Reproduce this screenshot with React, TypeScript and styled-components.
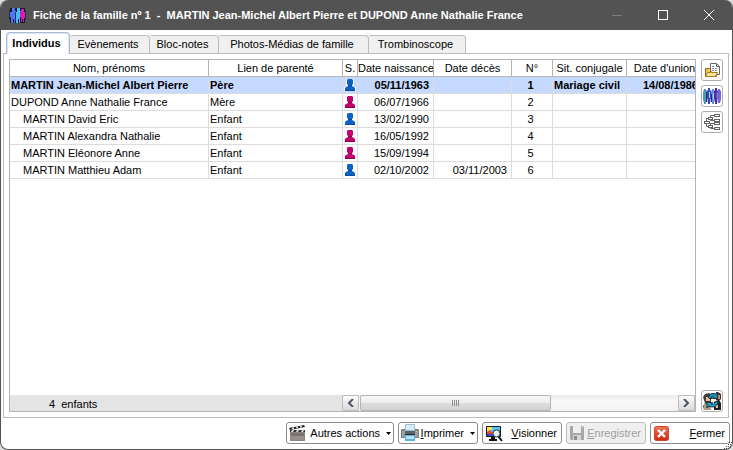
import React, { useState } from "react";
import styled, { createGlobalStyle, css } from "styled-components";

const GlobalStyle = createGlobalStyle`
  *, *::before, *::after { box-sizing: border-box; }
  html, body { margin: 0; padding: 0; }
  body { background: #dcdcdc; }
  body, button { font-family: "Liberation Sans", Arial, sans-serif; font-size: 11px; color: #000; }
`;

/* ---------- window frame ---------- */

const Window = styled.div`
  display: flex;
  flex-direction: column;
  height: 100vh;
  min-height: 280px;
  border: 1px solid #535353;
  border-top: 0;
  border-radius: 8px;
  background: #fff;
  overflow: hidden;
`;

const TitleBar = styled.header`
  display: flex;
  align-items: center;
  flex: 0 0 30px;
  padding-left: 8px;
  background: #535353;
  color: #fff;
`;

const Title = styled.h1`
  flex: 1;
  min-width: 0;
  margin: 0 0 0 7px;
  font-size: 11px;
  line-height: 14px;
  font-weight: bold;
  white-space: pre;
  overflow: hidden;
`;

const CaptionButton = styled.button`
  display: flex;
  align-items: center;
  justify-content: center;
  width: 46px;
  height: 30px;
  padding: 0;
  border: 0;
  background: none;
  color: #fff;
  &:disabled { color: #7c7c7c; }
`;

/* ---------- tabs ---------- */

const TabStrip = styled.div`
  display: flex;
  align-items: flex-end;
  flex: 0 0 23px;
  padding: 0 5px;
  position: relative;
`;

const Tab = styled.button<{ $width: number; $active: boolean }>`
  width: ${(p) => p.$width}px;
  height: 18px;
  padding: 0 3px 0 0;
  border: 1px solid #bcbcbc;
  border-left-width: 0;
  border-bottom: 0;
  border-radius: 2px 4px 0 0;
  background: #f0f0f0;
  line-height: 17px;
  white-space: nowrap;
  ${(p) =>
    p.$active &&
    css`
      z-index: 1;
      height: 22px;
      margin-bottom: -1px;
      border: 1px solid #a9bbd8;
      border-bottom: 0;
      border-radius: 4px 4px 0 0;
      box-shadow: inset 1px 1px 0 #dce6f6, inset -1px 0 0 #dce6f6;
      background: #fff;
      font-weight: bold;
    `}
`;

const Panel = styled.main`
  display: flex;
  flex: 1;
  min-height: 0;
  gap: 5px;
  margin: 0 3px 0 2px;
  padding: 5px;
  border: 1px solid #bcbcbc;
`;

/* ---------- grid ---------- */

const GridBox = styled.section`
  display: flex;
  flex-direction: column;
  flex: 1;
  min-width: 0;
  border: 1px solid #b4b4b4;
`;

const GridView = styled.div`
  flex: 1;
  min-height: 0;
  overflow: hidden;
`;

const Grid = styled.table`
  width: 100%;
  min-width: 693px;
  table-layout: fixed;
  border-collapse: separate;
  border-spacing: 0;
`;

const Col = styled.col<{ $width?: number }>`
  width: ${(p) => (p.$width ? `${p.$width}px` : "auto")};
`;

const HeadCell = styled.th`
  height: 17px;
  padding: 0;
  border-right: 1px solid #b4b4b4;
  border-bottom: 1px solid #b4b4b4;
  font-weight: normal;
  line-height: 16px;
  white-space: nowrap;
  overflow: hidden;
`;

const Row = styled.tr<{ $selected: boolean }>`
  background: ${(p) => (p.$selected ? "#c6daff" : "#fff")};
  font-weight: ${(p) => (p.$selected ? "bold" : "normal")};
`;

const Cell = styled.td<{ $align?: "left" | "center" | "right"; $indent?: boolean }>`
  height: 17px;
  padding: 0 4px 0 ${(p) => (p.$indent ? 13 : 1)}px;
  border-right: 1px solid #dcdcdc;
  border-bottom: 1px solid #dcdcdc;
  text-align: ${(p) => p.$align ?? "left"};
  line-height: 16px;
  white-space: nowrap;
`;

const IconCell = styled(Cell)`
  padding: 0;
  text-align: center;
  svg { display: block; margin: 0 auto; }
`;

const GridFooter = styled.footer`
  display: flex;
  flex: 0 0 16px;
  background: #e4e4e4;
`;

const Summary = styled.p`
  flex: 1;
  margin: 0;
  padding: 3px 0 0 39px;
  font-size: 11px;
  line-height: 13px;
  white-space: pre;
`;

const ScrollBar = styled.div`
  display: flex;
  width: 51.5%;
  height: 16px;
  background: linear-gradient(#eaeaea, #f8f8f8 40%, #f2f2f2);
`;

const ScrollArrow = styled.button`
  display: flex;
  align-items: center;
  justify-content: center;
  width: 17px;
  height: 16px;
  padding: 0;
  border: 1px solid #bdbdbd;
  border-radius: 1px;
  background: linear-gradient(#fdfdfd, #e9e9e9 50%, #dcdcdc);
`;

const ScrollTrack = styled.div`
  flex: 1;
  padding-left: 1px;
`;

const ScrollThumb = styled.button`
  display: flex;
  align-items: center;
  justify-content: center;
  width: 60%;
  height: 16px;
  padding: 0;
  border: 1px solid #b4b4b4;
  border-radius: 2px;
  background: linear-gradient(#f8f8f8, #ececec 48%, #dcdcdc 52%, #d2d2d2);
`;

/* ---------- side tools ---------- */

const SideTools = styled.nav`
  display: flex;
  flex-direction: column;
  gap: 4px;
`;

const ToolButton = styled.button<{ $last?: boolean }>`
  display: flex;
  align-items: center;
  justify-content: center;
  width: 22px;
  height: 22px;
  padding: 0;
  border: 1px solid #aeaeae;
  border-radius: 3px;
  background: #fff;
  ${(p) => p.$last && "margin-top: auto;"}
`;

/* ---------- bottom buttons ---------- */

const ActionBar = styled.div`
  display: flex;
  justify-content: flex-end;
  align-items: flex-start;
  flex: 0 0 31px;
  gap: 4px;
  padding: 4px 2px 0;
`;

const ActionButton = styled.button<{ $width?: number }>`
  display: flex;
  align-items: center;
  width: ${(p) => p.$width ?? 80}px;
  height: 22px;
  padding: 0 4px 0 2px;
  border: 1px solid #8c8c8c;
  border-radius: 3px;
  background: #fff;
  line-height: 14px;
  white-space: nowrap;
  svg { flex: none; }
  &:disabled {
    border-color: #bdbdbd;
    background: #efefef;
    color: #a0a0a0;
  }
`;

const CaretButton = styled(ActionButton)`
  padding-right: 2px;
`;

const ActionLabel = styled.span<{ $menu?: boolean }>`
  flex: 1;
  text-align: right;
  ${(p) => p.$menu && "padding-right: 6px;"}
`;

const Grip = styled.div`
  position: absolute;
  right: 0;
  bottom: 0;
  line-height: 0;
`;

/* ---------- drawings ---------- */

const FamilyIcon = () => (
  <svg width="17" height="16" viewBox="0 0 17 16" aria-hidden="true">
    <path d="M1 1h15v15H1z" fill="#15182c" />
    <path d="M0 3h1v10H0zM16 3h1v10h-1z" fill="#2a3041" />
    <path d="M3 1h3v3h1v6H6v6H5v-4H4v4H2v-6H1V5h2z" fill="#4b78f6" />
    <path d="M8 1h3v3h1v6h-1v6h-1v-4H9v4H7v-6H6V5h2z" fill="#4fb9f8" />
    <path d="M12 2h3v3h1v6h-1v4h-1v-3h-1v3h-1v-5h-1V6h1z" fill="#dc1cba" />
    <path d="M6 5h1v9H6zM11 5h1v1h-1z" fill="#20306e" />
  </svg>
);

const PersonIcon = ({ color, edge }: { color: string; edge: string }) => (
  <svg width="12" height="12" viewBox="-1 0 12 12" aria-hidden="true">
    <path d="M3 0h4l1 1v5L7 7l3 2v3H0V9l3-2-1-1V1z" fill="none" stroke="#fff" strokeWidth="2" />
    <path d="M3 0h4l1 1v4L7 6v1l2 1 1 1v3H0V9l1-1 2-1V6L2 5V1z" fill={color} />
    <path d="M0 11h10v1H0zM3 6h4v1H3z" fill={edge} />
  </svg>
);

const FolderDocIcon = () => (
  <svg width="16" height="16" viewBox="0 0 16 16" aria-hidden="true">
    <path d="M1.500 14.500v-8h4l1 1h6v7z" fill="#f6c64e" stroke="#8b6512" />
    <path d="M6.500 1.500h6l3 3v8h-9z" fill="#fff" stroke="#666" />
    <path d="M12.500 1.500v3h3" fill="none" stroke="#666" />
    <path d="M8 4.500h3M8 6.500h6M8 8.500h6" stroke="#8a8a8a" strokeDasharray="2 1" />
    <path d="M1.500 14.500l2-4h3l1-1 0 1h6l-2 4z" fill="#ffe59a" stroke="#a87a1b" />
  </svg>
);

const CrowdIcon = () => (
  <svg width="18" height="16" viewBox="0 0 18 16" aria-hidden="true">
    <path d="M0 2h18v12H0z" fill="#b3aee4" />
    <path d="M1 1h2v2h1v8H3v5H1v-4H0V4h1z" fill="#4b9cae" />
    <path d="M5 0h2v3h1v8H7v5H5v-5H4V3h1z" fill="#3d4cb4" />
    <path d="M9 1h2v2h1v9h-1v4H9v-4H8V4h1z" fill="#5c91e8" />
    <path d="M12 0h2v3h1v8h-1v5h-2v-5h-1V3h1z" fill="#5426a2" />
    <path d="M15 1h2v2h1v9h-1v3h-2v-4h-1V4h1z" fill="#6c6bd0" />
    <path d="M3 4h1v10H3zM8 6h1v8H8z" fill="#2c2f88" />
    <path d="M6 4h1v6H6zM10 5h1v6h-1z" fill="#a4d8f4" />
    <path d="M13 5h1v5h-1z" fill="#9a49c8" />
  </svg>
);

const TreeIcon = () => (
  <svg width="16" height="16" viewBox="0 0 16 16" aria-hidden="true">
    <g fill="#fff" stroke="#626262">
      <path d="M2.500 7v-2.500h2M2.500 10v2.500h2M6.500 3v-1.500h4M6.500 5v1.500h4M6.500 11v-1.500h4M6.500 13v1.500h4" fill="none" />
      <rect x="0.500" y="7.500" width="5" height="2" />
      <rect x="4.500" y="3.500" width="4" height="2" />
      <rect x="4.500" y="11.500" width="4" height="2" />
      <rect x="10.500" y="0.500" width="5" height="2" />
      <rect x="10.500" y="5.500" width="5" height="2" />
      <rect x="10.500" y="8.500" width="5" height="2" />
      <rect x="10.500" y="13.500" width="5" height="2" />
    </g>
  </svg>
);

const SwapPeopleIcon = () => (
  <svg width="18" height="18" viewBox="0 0 18 18" aria-hidden="true">
    <path d="M0 5l2-3 4-1 3 2 1 4-3 5 1 5-7 1-1-4 2-3z" fill="#423b38" />
    <path d="M3 5h4v4H3z" fill="#edbd93" />
    <path d="M1 12l4-1 3 3v4H1z" fill="#b49a86" />
    <path d="M12 2l3-2 3 2v5l-2 2-3-1z" fill="#4b2a1e" />
    <path d="M14 3h3v4h-2z" fill="#d98e63" />
    <path d="M11 10l5-2 2 3v7h-7z" fill="#1e2328" />
    <path d="M12 13h3v3h-2z" fill="#e9b78d" />
    <path d="M5 5c2-4 6-4 8-3l1-2 1 6-5 1 1-2c-2-1-3 0-4 2z" fill="#1890b6" stroke="#083448" strokeWidth="1" />
    <path d="M15 10c-1 5-6 6-9 4l-2 2 0-6 6 1-2 1c2 1 4 0 5-3z" fill="#24a4c4" stroke="#083448" strokeWidth="1" />
    <path d="M8 7h3v3H8z" fill="#fff" />
  </svg>
);

const ClapIcon = () => (
  <svg width="17" height="18" viewBox="0 0 17 18" aria-hidden="true">
    <path d="M0 4l15-3 1 2L1 6z" fill="#222" />
    <path d="M3 4l2-1 0 2-2 0zM7 3l2-1 0 2-2 0zM11 2l2 0 0 1-2 1z" fill="#ddd" />
    <path d="M1 6h15v2H1z" fill="#333" />
    <path d="M3 6h2L4 8H2zM8 6h2L9 8H7zM13 6h2l-1 2h-2z" fill="#ddd" />
    <path d="M1 8h15v9H1z" fill="#8a8580" />
    <path d="M2 9h13v3H2z" fill="#77726e" />
    <path d="M2 12h13v4H2z" fill="#969089" />
  </svg>
);

const PrinterIcon = () => (
  <svg width="18" height="18" viewBox="0 0 18 18" aria-hidden="true">
    <path d="M4.500 0.500h9v6h-9z" fill="#d7ecf5" stroke="#9cc0cf" />
    <path d="M1 5h3v2h10V5h3l1 1v8H0V6z" fill="#7b8186" />
    <path d="M1 7h3v6H1zM14 7h3v6h-3z" fill="#9aa0a4" />
    <path d="M4 7h10v3H4z" fill="#5c6267" />
    <path d="M4 10h10v1H4z" fill="#2a2d30" />
    <path d="M4 11h10v6H4z" fill="#5fb2da" />
    <path d="M5 12h8v3H5z" fill="#b6e2f5" />
    <path d="M15 7h1v1h-1z" fill="#c6e865" />
  </svg>
);

const ViewIcon = () => (
  <svg width="18" height="18" viewBox="0 0 18 18" aria-hidden="true">
    <rect x="1" y="2" width="15" height="11" rx="1" fill="#10151c" />
    <path d="M2 3h13v9H2z" fill="#53c3f8" />
    <path d="M2 3h5v3H5v2H2z" fill="#ffe548" />
    <path d="M2 8l3-2 3 3v3H2z" fill="#e24a35" />
    <path d="M2 10h6v2H2z" fill="#2553d0" />
    <path d="M6 13h4v2h2v2H4v-2h2z" fill="#111" />
    <path d="M13 12l4 5" stroke="#111" strokeWidth="2" />
    <circle cx="11.500" cy="9.500" r="3.500" fill="#e4f3fb" stroke="#333" />
    <path d="M10 9l2-2" stroke="#fff" />
  </svg>
);

const DiskIcon = () => (
  <svg width="16" height="16" viewBox="0 0 16 16" aria-hidden="true">
    <path d="M1 1h13l1 1v13H2l-1-1z" fill="#a7a7a7" />
    <path d="M4 1h8v7H4z" fill="#efefef" />
    <path d="M4 10h8v5H4z" fill="#d5d5d5" />
    <path d="M5 11h3v4H5z" fill="#8e8e8e" />
    <path d="M13 2h1v1h-1z" fill="#eee" />
  </svg>
);

const CloseIcon = () => (
  <svg width="17" height="17" viewBox="0 0 17 17" aria-hidden="true">
    <defs>
      <linearGradient id="closeRed" x1="0" y1="0" x2="0" y2="1">
        <stop offset="0" stopColor="#ee7a5b" />
        <stop offset="1" stopColor="#d0260f" />
      </linearGradient>
    </defs>
    <rect x="1.500" y="1.500" width="14" height="14" rx="2" fill="url(#closeRed)" stroke="#c9452c" />
    <path d="M5 5l7 7M12 5l-7 7" stroke="#fff" strokeWidth="2.400" />
  </svg>
);

const CaretDown = () => (
  <svg width="5" height="3" viewBox="0 0 5 3" aria-hidden="true">
    <path d="M0 0h5L2.500 3z" fill="#000" />
  </svg>
);

const Arrow = ({ right }: { right?: boolean }) => (
  <svg width="7" height="8" viewBox="0 0 7 8" aria-hidden="true">
    <path d={right ? "M1 0l4 4-4 4" : "M6 0L2 4l4 4"} fill="none" stroke="#4d5564" strokeWidth="2" />
  </svg>
);

/* ---------- data ---------- */

const tabs = [
  { label: "Individus", width: 64 },
  { label: "Evènements", width: 80 },
  { label: "Bloc-notes", width: 69 },
  { label: "Photos-Médias de famille", width: 150 },
  { label: "Trombinoscope", width: 97 },
];

const columns: { label: string; width?: number }[] = [
  { label: "Nom, prénoms" },
  { label: "Lien de parenté", width: 134 },
  { label: "S.", width: 15 },
  { label: "Date naissance", width: 76 },
  { label: "Date décès", width: 78 },
  { label: "N°", width: 41 },
  { label: "Sit. conjugale", width: 74 },
  { label: "Date d'union", width: 76 },
];

const people = [
  { name: "MARTIN Jean-Michel Albert Pierre", link: "Père", sex: "m", born: "05/11/1963", died: "", status: "Mariage civil", union: "14/08/1986" },
  { name: "DUPOND Anne Nathalie France", link: "Mère", sex: "f", born: "06/07/1966", died: "", status: "", union: "" },
  { name: "MARTIN David Eric", link: "Enfant", sex: "m", born: "13/02/1990", died: "", status: "", union: "" },
  { name: "MARTIN Alexandra Nathalie", link: "Enfant", sex: "f", born: "16/05/1992", died: "", status: "", union: "" },
  { name: "MARTIN Eléonore Anne", link: "Enfant", sex: "f", born: "15/09/1994", died: "", status: "", union: "" },
  { name: "MARTIN Matthieu Adam", link: "Enfant", sex: "m", born: "02/10/2002", died: "03/11/2003", status: "", union: "" },
];

export default function App() {
  const [tab, setTab] = useState(0);
  const [selected, setSelected] = useState(0);

  return (
    <>
      <GlobalStyle />
      <Window>
        <TitleBar>
          <FamilyIcon />
          <Title>{"Fiche de la famille nº 1  -  MARTIN Jean-Michel Albert Pierre et DUPOND Anne Nathalie France"}</Title>
          <CaptionButton disabled aria-label="Réduire">
            <svg width="10" height="10" viewBox="0 0 10 10"><path d="M0 5.500h10" stroke="currentColor" /></svg>
          </CaptionButton>
          <CaptionButton aria-label="Agrandir">
            <svg width="10" height="10" viewBox="0 0 10 10"><rect x="0.500" y="0.500" width="9" height="9" fill="none" stroke="currentColor" /></svg>
          </CaptionButton>
          <CaptionButton aria-label="Fermer la fenêtre">
            <svg width="10" height="10" viewBox="0 0 10 10"><path d="M0 0l10 10M10 0L0 10" stroke="currentColor" /></svg>
          </CaptionButton>
        </TitleBar>

        <TabStrip role="tablist">
          {tabs.map((t, i) => (
            <Tab key={t.label} role="tab" aria-selected={i === tab} $width={t.width} $active={i === tab} onClick={() => setTab(i)}>
              {t.label}
            </Tab>
          ))}
        </TabStrip>

        <Panel>
          <GridBox>
            <GridView>
              <Grid>
                <colgroup>
                  {columns.map((c) => <Col key={c.label} $width={c.width} />)}
                </colgroup>
                <thead>
                  <tr>{columns.map((c) => <HeadCell key={c.label} scope="col">{c.label}</HeadCell>)}</tr>
                </thead>
                <tbody>
                  {people.map((p, i) => (
                    <Row key={p.name} $selected={i === selected} onClick={() => setSelected(i)}>
                      <Cell $indent={i > 1}>{p.name}</Cell>
                      <Cell>{p.link}</Cell>
                      <IconCell>
                        <PersonIcon color={p.sex === "m" ? "#0a63c9" : "#c4006e"} edge={p.sex === "m" ? "#084a96" : "#8c0050"} />
                      </IconCell>
                      <Cell $align="right">{p.born}</Cell>
                      <Cell $align="right">{p.died}</Cell>
                      <Cell $align="center">{i + 1}</Cell>
                      <Cell>{p.status}</Cell>
                      <Cell $align="right">{p.union}</Cell>
                    </Row>
                  ))}
                </tbody>
              </Grid>
            </GridView>
            <GridFooter>
              <Summary>{"4  enfants"}</Summary>
              <ScrollBar>
                <ScrollArrow aria-label="Défiler à gauche"><Arrow /></ScrollArrow>
                <ScrollTrack>
                  <ScrollThumb aria-label="Défilement">
                    <svg width="8" height="6" viewBox="0 0 8 6"><path d="M0.500 0v6M2.500 0v6M4.500 0v6M6.500 0v6" stroke="#8e8e8e" /></svg>
                  </ScrollThumb>
                </ScrollTrack>
                <ScrollArrow aria-label="Défiler à droite"><Arrow right /></ScrollArrow>
              </ScrollBar>
            </GridFooter>
          </GridBox>
          <SideTools aria-label="Outils">
            <ToolButton aria-label="Dossier"><FolderDocIcon /></ToolButton>
            <ToolButton aria-label="Famille"><CrowdIcon /></ToolButton>
            <ToolButton aria-label="Arbre"><TreeIcon /></ToolButton>
            <ToolButton $last aria-label="Changer de famille"><SwapPeopleIcon /></ToolButton>
          </SideTools>
        </Panel>

        <ActionBar>
          <CaretButton $width={108}>
            <ClapIcon />
            <ActionLabel $menu>Autres actions</ActionLabel>
            <CaretDown />
          </CaretButton>
          <CaretButton>
            <PrinterIcon />
            <ActionLabel $menu><u>I</u>mprimer</ActionLabel>
            <CaretDown />
          </CaretButton>
          <ActionButton>
            <ViewIcon />
            <ActionLabel><u>V</u>isionner</ActionLabel>
          </ActionButton>
          <ActionButton disabled>
            <DiskIcon />
            <ActionLabel><u>E</u>nregistrer</ActionLabel>
          </ActionButton>
          <ActionButton>
            <CloseIcon />
            <ActionLabel><u>F</u>ermer</ActionLabel>
          </ActionButton>
        </ActionBar>
        <Grip>
          <svg width="10" height="8" viewBox="0 0 10 8" aria-hidden="true">
            <path d="M6 0h1v1H6zM8 0h1v1H8zM5 2h1v1H5zM7 2h1v1H7zM3 4h1v1H3zM5 4h1v1H5zM7 4h1v1H7zM1 6h1v1H1zM3 6h1v1H3zM5 6h1v1H5z" fill="#444" />
          </svg>
        </Grip>
      </Window>
    </>
  );
}
